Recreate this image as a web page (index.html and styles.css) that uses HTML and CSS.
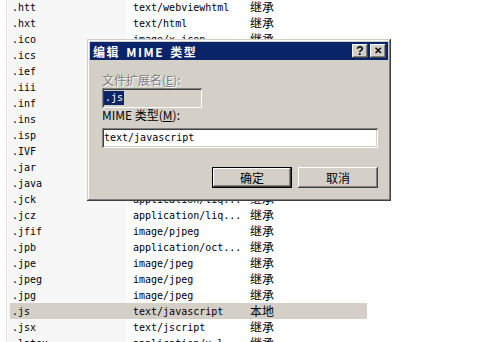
FILE: index.html
```html
<!DOCTYPE html>
<html lang="zh-CN">
  <head>
    <meta charset="UTF-8" />
    <title>MIME 类型</title>
    <link rel="stylesheet" href="styles.css">
  </head>
  <body>
    <div class="list">
      <div class="row"><span>.htt</span><span>text/webviewhtml</span><span class="cn">继承</span></div>
      <div class="row"><span>.hxt</span><span>text/html</span><span class="cn">继承</span></div>
      <div class="row"><span>.ico</span><span>image/x-icon</span><span class="cn">继承</span></div>
      <div class="row"><span>.ics</span><span>text/calendar</span><span class="cn">继承</span></div>
      <div class="row"><span>.ief</span><span>image/ief</span><span class="cn">继承</span></div>
      <div class="row"><span>.iii</span><span>application/x-i...</span><span class="cn">继承</span></div>
      <div class="row"><span>.inf</span><span>application/oct...</span><span class="cn">继承</span></div>
      <div class="row"><span>.ins</span><span>application/x-i...</span><span class="cn">继承</span></div>
      <div class="row"><span>.isp</span><span>application/x-i...</span><span class="cn">继承</span></div>
      <div class="row"><span>.IVF</span><span>video/x-ivf</span><span class="cn">继承</span></div>
      <div class="row"><span>.jar</span><span>application/jav...</span><span class="cn">继承</span></div>
      <div class="row"><span>.java</span><span>application/oct...</span><span class="cn">继承</span></div>
      <div class="row"><span>.jck</span><span>application/liq...</span><span class="cn">继承</span></div>
      <div class="row"><span>.jcz</span><span>application/liq...</span><span class="cn">继承</span></div>
      <div class="row"><span>.jfif</span><span>image/pjpeg</span><span class="cn">继承</span></div>
      <div class="row"><span>.jpb</span><span>application/oct...</span><span class="cn">继承</span></div>
      <div class="row"><span>.jpe</span><span>image/jpeg</span><span class="cn">继承</span></div>
      <div class="row"><span>.jpeg</span><span>image/jpeg</span><span class="cn">继承</span></div>
      <div class="row"><span>.jpg</span><span>image/jpeg</span><span class="cn">继承</span></div>
      <div class="row selected"><span>.js</span><span>text/javascript</span><span class="cn">本地</span></div>
      <div class="row"><span>.jsx</span><span>text/jscript</span><span class="cn">继承</span></div>
      <div class="row"><span>.latex</span><span>application/x-l...</span><span class="cn">继承</span></div>
    </div>

    <div class="dialog">
      <div class="titlebar">
        <span class="title">编辑 MIME 类型</span>
        <span class="tbtn">?</span>
        <span class="tbtn close">✕</span>
      </div>
      <div class="body">
        <label class="disabled">文件扩展名(<u>E</u>):</label>
        <div class="field small"><span class="sel">.js</span></div>
        <label>MIME 类型(<u>M</u>):</label>
        <div class="field wide">text/javascript</div>
        <div class="buttons">
          <button class="default">确定</button>
          <button>取消</button>
        </div>
      </div>
    </div>
  </body>
</html>
```

FILE: styles.css
```css
/* Page */
body {
  margin: 0;
  background: #ffffff;
  color: #000;
  font-family: "DejaVu Sans Mono", "Noto Sans CJK SC", monospace;
  font-size: 10px;
  height: 342px;
  overflow: hidden;
}

/* List behind the dialog */
.list {
  margin: -1px 0 0 6px;
  width: 400px;
  border-left: 1px solid #e8e8e8;
  background: linear-gradient(to right, #f7f7f7 0 120px, #ffffff 120px);
}

.row {
  display: grid;
  grid-template-columns: 121px 117px 1fr;
  align-items: center;
  height: 16px;
  width: 357px;
  margin-left: 3px;
}

.row span {
  padding-left: 2px;
  white-space: nowrap;
  overflow: hidden;
}

.row .cn {
  font-family: "Noto Sans CJK SC", sans-serif;
  font-size: 12px;
  line-height: 16px;
}

.row.selected {
  background: #d4d0c8;
}

/* Dialog window */
.dialog {
  position: absolute;
  left: 87px;
  top: 39px;
  width: 298px;
  height: 156px;
  padding: 3px;
  background: #d4d0c8;
  box-shadow: inset -1px -1px #404040, inset 1px 1px #d4d0c8,
    inset -2px -2px #808080, inset 2px 2px #ffffff;
}

.titlebar {
  display: flex;
  align-items: center;
  gap: 2px;
  height: 18px;
  padding: 0 2px 0 3px;
  background: #0a246a;
}

.title {
  flex: 1;
  color: #fff;
  font-family: "Noto Sans CJK SC", sans-serif;
  font-weight: bold;
  font-size: 12px;
  letter-spacing: 1.5px;
  word-spacing: 2px;
}

.tbtn {
  width: 16px;
  height: 14px;
  line-height: 14px;
  text-align: center;
  background: #d4d0c8;
  font-family: "Liberation Sans", sans-serif;
  font-weight: bold;
  font-size: 12px;
  box-shadow: inset -1px -1px #404040, inset 1px 1px #ffffff,
    inset -2px -2px #808080;
}

.tbtn.close {
  font-size: 10px;
}

.body {
  padding: 14px 0 0 12px;
}

label {
  display: block;
  height: 12px;
  font-family: "Noto Sans CJK SC", sans-serif;
  font-size: 12px;
  line-height: 12px;
  margin-bottom: 2px;
}

label.disabled {
  color: #808080;
  text-shadow: 1px 1px #ffffff;
}

.field {
  box-sizing: border-box;
  height: 20px;
  padding: 3px 2px;
  line-height: 14px;
  box-shadow: inset 1px 1px #808080, inset -1px -1px #ffffff,
    inset 2px 2px #404040, inset -2px -2px #d4d0c8;
}

.field.small {
  width: 100px;
  margin-bottom: 1px;
}

.field.wide {
  width: 276px;
  background: #fff;
}

.body label + .field.wide {
  margin-top: 7px;
}

.sel {
  display: inline-block;
  padding: 0 1px;
  background: #0a246a;
  color: #fff;
}

.buttons {
  display: flex;
  justify-content: flex-end;
  gap: 6px;
  width: 276px;
  margin-top: 19px;
}

button {
  width: 80px;
  height: 21px;
  padding: 0;
  border: none;
  background: #d4d0c8;
  font-family: "Noto Sans CJK SC", sans-serif;
  font-size: 12px;
  box-shadow: inset -1px -1px #404040, inset 1px 1px #ffffff,
    inset -2px -2px #808080;
}

button.default {
  box-shadow: inset 0 0 0 1px #000, inset -2px -2px #404040,
    inset 2px 2px #ffffff, inset -3px -3px #808080;
}
```
